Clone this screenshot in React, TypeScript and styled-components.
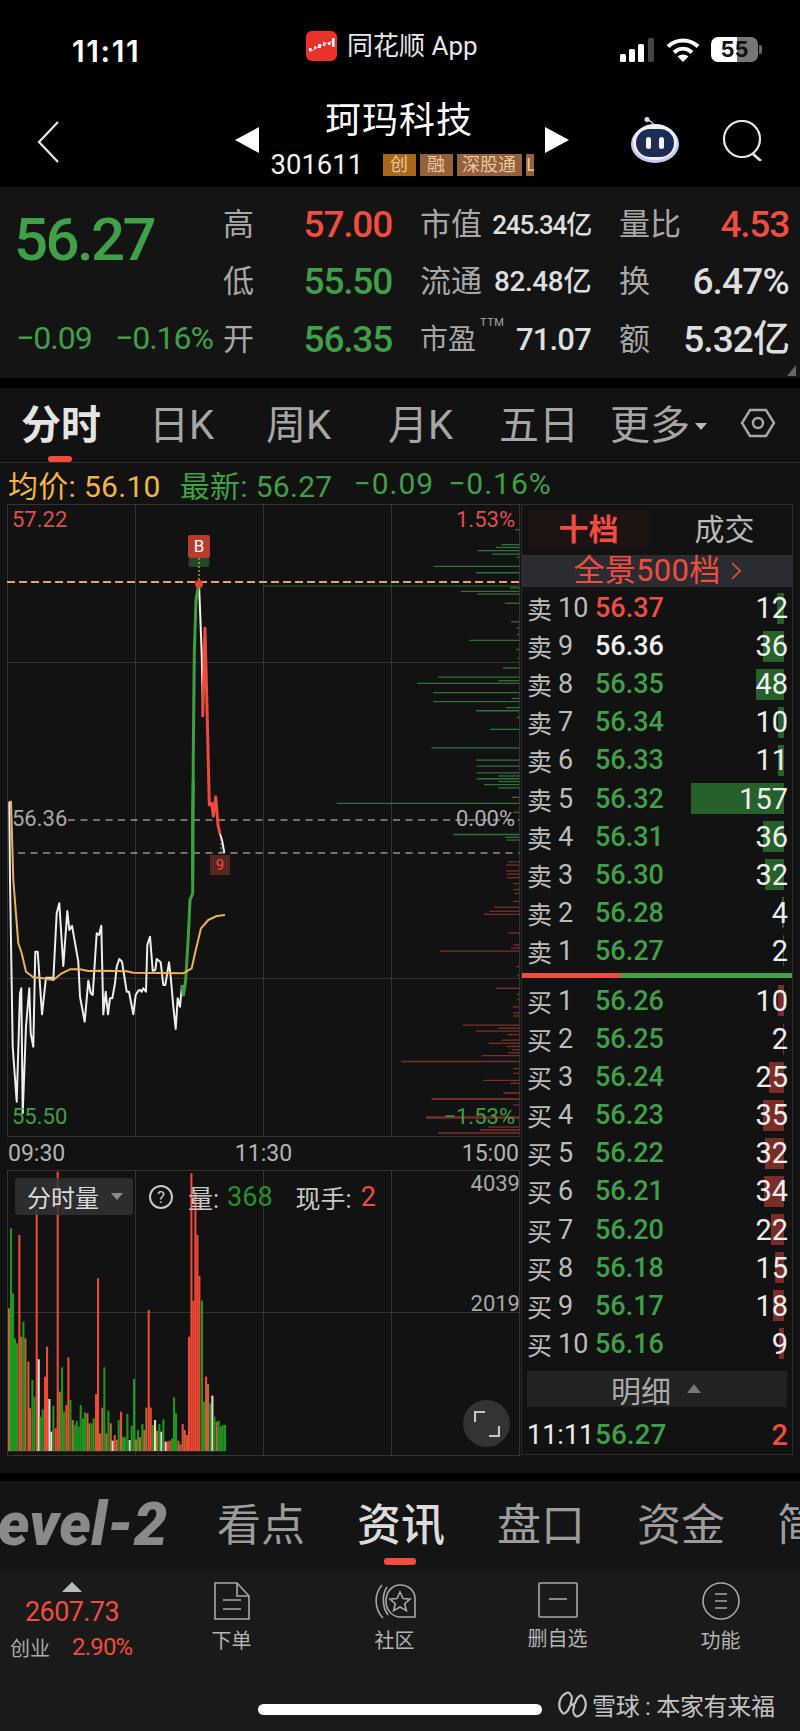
import React from "react";
import styled, { createGlobalStyle } from "styled-components";

const SANS = `Roboto, "Noto Sans CJK SC", sans-serif`;
const RED = "#f04d3f";
const GREEN = "#3fa047";

const Global = createGlobalStyle`
  html, body { margin: 0; padding: 0; background: #000; }
  * { box-sizing: border-box; }
`;

const Page = styled.div`
  width: 800px;
  height: 1731px;
  overflow: hidden;
  background: #000;
  font-family: ${SANS};
  color: #ddd;
  display: flex;
  flex-direction: column;
`;

/* ---------- status bar ---------- */
const StatusBar = styled.div`
  height: 88px;
  display: flex;
  align-items: flex-start;
  color: #fff;
`;
const Clock = styled.div`
  margin: 35px 0 0 72px;
  width: 234px;
  font: 600 30px/32px Inter, sans-serif;
  letter-spacing: 1.6px;
`;
const AppBadge = styled.div`
  display: flex;
  align-items: center;
  gap: 10px;
  margin-top: 31px;
  width: 314px;
  font-size: 26px;
  line-height: 30px;
  color: #e8e8e8;
`;
const StatusIcons = styled.div`
  display: flex;
  align-items: center;
  gap: 11px;
  margin-top: 37px;
`;
const Battery = styled.div`
  position: relative;
  width: 47px;
  height: 25px;
  border-radius: 7px;
  background: linear-gradient(90deg, #fff 0 56%, #777 56% 100%);
  color: #111;
  font: 700 22px/25px Inter, sans-serif;
  text-align: center;
  &::after {
    content: "";
    position: absolute;
    right: -4px;
    top: 8px;
    width: 3px;
    height: 9px;
    border-radius: 0 2px 2px 0;
    background: #666;
  }
`;

/* ---------- nav bar ---------- */
const NavBar = styled.div`
  height: 99px;
  display: grid;
  grid-template-columns: 235px 334px 153px 78px;
  align-items: start;
  color: #fff;
`;
const BackCell = styled.div`
  padding: 33px 0 0 37px;
`;
const TitleCell = styled.div`
  display: flex;
  align-items: flex-start;
  justify-content: space-between;
  padding-top: 39px;
`;
const TitleColumn = styled.div`
  display: flex;
  flex-direction: column;
  width: 263px;
  margin-top: -27px;
  overflow: hidden;
`;
const StockName = styled.div`
  font-size: 36px;
  line-height: 42px;
  text-align: center;
  padding-right: 6px;
  letter-spacing: 1px;
`;
const CodeLine = styled.div`
  display: flex;
  align-items: center;
  margin-top: 10px;
  height: 26px;
`;
const Code = styled.span`
  font-size: 27.5px;
  line-height: 26px;
  width: 112px;
  flex: none;
  color: #f0f0f0;
`;
const Tag = styled.span<{ $orange?: boolean; $w: number }>`
  flex: none;
  width: ${(p) => p.$w}px;
  height: 22px;
  margin-right: 4px;
  background: ${(p) => (p.$orange ? "#a8681a" : "#96603a")};
  color: #e8c9a0;
  font-size: 18px;
  line-height: 22px;
  text-align: center;
  overflow: hidden;
  white-space: nowrap;
`;
const RobotCell = styled.div`
  padding: 29px 0 0 61px;
`;
const SearchCell = styled.div`
  padding-top: 32px;
`;

/* ---------- quote panel ---------- */
const Quote = styled.div`
  position: relative;
  height: 191px;
  background: #141414;
  padding: 9px 0 9px 16px;
  display: grid;
  grid-template-columns: 179px 169px 171px 170px;
  grid-auto-rows: 57.5px;
  column-gap: 28px;
`;
const BigPrice = styled.div`
  grid-row: 1 / span 2;
  grid-column: 1;
  margin: 14px 0 0 -2px;
  font-size: 60px;
  line-height: 60px;
  font-weight: 500;
  letter-spacing: -2.6px;
  color: ${GREEN};
`;
const ChangeRow = styled.div`
  grid-row: 3;
  grid-column: 1;
  width: 197px;
  display: flex;
  justify-content: space-between;
  align-items: center;
  margin-top: -3px;
  font-size: 32px;
  letter-spacing: -1px;
  color: ${GREEN};
`;
const Stat = styled.div`
  display: flex;
  justify-content: space-between;
  align-items: center;
`;
const StatLabel = styled.span<{ $size?: number }>`
  font-size: ${(p) => p.$size ?? 31}px;
  color: #a8a8a8;
  line-height: 40px;
  position: relative;
`;
const Ttm = styled.sup`
  position: absolute;
  left: 100%;
  top: -4px;
  margin-left: 4px;
  font-size: 11px;
  line-height: 14px;
  letter-spacing: 0.5px;
  color: #a8a8a8;
`;
const StatValue = styled.span<{ $size?: number; $color?: string; $ls?: number }>`
  font-size: ${(p) => p.$size ?? 37}px;
  font-weight: 500;
  letter-spacing: ${(p) => p.$ls ?? -1.2}px;
  color: ${(p) => p.$color ?? "#dedede"};
  white-space: nowrap;
  line-height: 40px;
`;
const Corner = styled.div`
  position: absolute;
  right: 4px;
  bottom: 2px;
  width: 0;
  height: 0;
  border-style: solid;
  border-width: 0 0 11px 9px;
  border-color: transparent transparent #666 transparent;
`;
const Band = styled.div<{ $h: number }>`
  height: ${(p) => p.$h}px;
  background: #000;
  flex: none;
`;

/* ---------- chart area ---------- */
const ChartPanel = styled.div`
  height: 1085px;
  background: #121212;
  display: flex;
  flex-direction: column;
`;
const ChartTabs = styled.div`
  height: 75px;
  flex: none;
  padding-left: 21px;
  display: grid;
  grid-template-columns: 128px 117px 122px 111px 111px 130px 1fr;
  align-items: start;
  border-bottom: 1px solid #2c2c2c;
`;
const ChartTab = styled.div<{ $active?: boolean }>`
  position: relative;
  margin-top: 13px;
  height: 50px;
  font-size: 40px;
  line-height: 50px;
  white-space: nowrap;
  color: ${(p) => (p.$active ? "#e4e4e4" : "#a6a6a6")};
  font-weight: ${(p) => (p.$active ? 700 : 400)};
  display: flex;
  align-items: center;
`;
const TabUnderline = styled.div`
  position: absolute;
  left: 27px;
  top: 55px;
  width: 24px;
  height: 6px;
  border-radius: 3px;
  background: ${RED};
`;
const MoreCaret = styled.span`
  width: 0;
  height: 0;
  margin-left: 5px;
  border-style: solid;
  border-width: 7px 6px 0 6px;
  border-color: #bbb transparent transparent transparent;
`;
const HexCell = styled.div`
  padding-top: 20px;
`;
const Legend = styled.div`
  height: 41px;
  flex: none;
  padding-left: 8px;
  display: flex;
  align-items: center;
  font-size: 30px;
  letter-spacing: 0.3px;
  white-space: nowrap;
`;
const LegendPart = styled.span<{ $color: string; $gap?: number; $wide?: boolean }>`
  color: ${(p) => p.$color};
  margin-left: ${(p) => p.$gap ?? 0}px;
  letter-spacing: ${(p) => (p.$wide ? 1 : 0.3)}px;
`;
const Body = styled.div`
  height: 951px;
  flex: none;
  padding-left: 7px;
  display: flex;
  align-items: flex-start;
`;
const LeftColumn = styled.div`
  width: 514px;
  flex: none;
  display: flex;
  flex-direction: column;
`;
const ChartFrame = styled.div<{ $h: number }>`
  position: relative;
  height: ${(p) => p.$h}px;
  flex: none;
`;
const ChartSvg = styled.svg`
  display: block;
`;
const ChartLabel = styled.span<{ $top: number; $left?: number; $right?: number; $color: string }>`
  position: absolute;
  top: ${(p) => p.$top}px;
  ${(p) => (p.$left !== undefined ? `left: ${p.$left}px;` : `right: ${p.$right}px;`)}
  color: ${(p) => p.$color};
  font-size: 22px;
  line-height: 26px;
`;
const TimeAxis = styled.div`
  height: 34px;
  flex: none;
  display: flex;
  justify-content: space-between;
  align-items: center;
  padding: 0 2px 0 1px;
  font-size: 23px;
  color: #b4b4b4;
`;
const VolHeader = styled.div`
  position: absolute;
  left: 8px;
  top: 8px;
  height: 37px;
  display: flex;
  align-items: center;
  font-size: 25px;
  color: #c8c8c8;
  white-space: nowrap;
`;
const VolChip = styled.div`
  width: 118px;
  height: 37px;
  margin-right: 16px;
  padding-left: 12px;
  display: flex;
  align-items: center;
  gap: 12px;
  border-radius: 3px;
  background: rgba(50, 50, 50, 0.85);
  color: #dcdcdc;
  font-size: 24px;
`;
const ChipCaret = styled.span`
  width: 0;
  height: 0;
  border-style: solid;
  border-width: 7px 6px 0 6px;
  border-color: #8a8a8a transparent transparent transparent;
`;
const Help = styled.span`
  width: 24px;
  height: 24px;
  margin-right: 15px;
  border: 2px solid #c8c8c8;
  border-radius: 50%;
  font-size: 17px;
  line-height: 20px;
  text-align: center;
`;
const VolPart = styled.span<{ $color?: string; $gap?: number; $num?: boolean }>`
  color: ${(p) => p.$color ?? "inherit"};
  margin-left: ${(p) => p.$gap ?? 0}px;
  font-size: ${(p) => (p.$num ? 27 : 25)}px;
`;
const ExpandButton = styled.div`
  position: absolute;
  right: 11px;
  bottom: 8px;
  width: 47px;
  height: 47px;
  border-radius: 50%;
  background: #333;
  display: flex;
  align-items: center;
  justify-content: center;
`;
const MarkB = styled.div`
  position: absolute;
  left: 181px;
  top: 31px;
  width: 22px;
  height: 23px;
  border-radius: 2px;
  background: #b83c2e;
  color: #fff;
  font-size: 17px;
  line-height: 23px;
  text-align: center;
`;
const Mark9 = styled.div`
  position: absolute;
  left: 203px;
  top: 351px;
  width: 20px;
  height: 20px;
  background: #5a2520;
  color: ${RED};
  font-size: 15px;
  line-height: 20px;
  text-align: center;
`;

/* ---------- order book ---------- */
const SidePanel = styled.div`
  width: 272px;
  height: 951px;
  flex: none;
  border: 1px solid #2c2c2c;
  display: flex;
  flex-direction: column;
`;
const BookTabs = styled.div`
  height: 50px;
  flex: none;
  padding: 5px 0 0 6px;
  display: flex;
`;
const BookTab = styled.div<{ $active?: boolean }>`
  height: 38px;
  width: 121px;
  flex: ${(p) => (p.$active ? "none" : 1)};
  padding-left: ${(p) => (p.$active ? 0 : 8)}px;
  border-radius: 3px;
  background: ${(p) => (p.$active ? "#1d1312" : "transparent")};
  color: ${(p) => (p.$active ? RED : "#b8b8b8")};
  font-size: 30px;
  font-weight: ${(p) => (p.$active ? 700 : 400)};
  line-height: 40px;
  text-align: center;
`;
const PanoBanner = styled.div`
  height: 32px;
  flex: none;
  background: #2a2c32;
  color: ${RED};
  font-size: 31px;
  letter-spacing: 0.3px;
  line-height: 32px;
  display: flex;
  justify-content: center;
  align-items: center;
  gap: 10px;
`;
const BookRows = styled.div<{ $top: number }>`
  margin-top: ${(p) => p.$top}px;
  flex: none;
  display: flex;
  flex-direction: column;
`;
const BookRow = styled.div`
  position: relative;
  height: 38.1px;
  padding: 0 4px 0 5px;
  display: grid;
  grid-template-columns: 31px 37px 1fr auto;
  align-items: center;
  white-space: nowrap;
`;
const Side = styled.span`
  font-size: 25px;
  color: #bcbcbc;
`;
const Level = styled.span`
  font-size: 27px;
  color: #bcbcbc;
`;
const Price = styled.span<{ $color: string }>`
  font-size: 27px;
  font-weight: 500;
  color: ${(p) => p.$color};
`;
const Vol = styled.span`
  position: relative;
  font-size: 29px;
  color: #eee;
`;
const VolBar = styled.div<{ $buy?: boolean }>`
  position: absolute;
  right: 8px;
  top: 3.5px;
  height: 31px;
  background: ${(p) => (p.$buy ? "#7a2c26" : "#26602a")};
`;
const RatioBar = styled.div`
  margin-top: 3px;
  height: 5px;
  flex: none;
  display: flex;
`;
const RatioPart = styled.div<{ $grow: number; $color: string }>`
  flex: ${(p) => p.$grow};
  background: ${(p) => p.$color};
`;
const DetailBar = styled.div`
  margin: 8px 5px 0 5px;
  height: 36px;
  flex: none;
  background: #222;
  display: flex;
  align-items: center;
  padding-left: 84px;
  gap: 16px;
  font-size: 30px;
  color: #aaa;
`;
const UpCaret = styled.span`
  width: 0;
  height: 0;
  border-style: solid;
  border-width: 0 7px 9px 7px;
  border-color: transparent transparent #777 transparent;
`;
const LastTrade = styled.div`
  margin-top: 10px;
  height: 36px;
  padding: 0 4px 0 5px;
  display: grid;
  grid-template-columns: 68px 1fr auto;
  align-items: center;
  font-size: 27px;
  color: #eee;
  white-space: nowrap;
`;
const LastPrice = styled(Price)`
  font-size: 28px;
`;
const LastVol = styled(Price)`
  font-size: 29px;
`;

/* ---------- section tabs ---------- */
const SectionTabs = styled.div`
  height: 89px;
  flex: none;
  background: #141414;
  display: flex;
  align-items: flex-start;
  gap: 53px;
  overflow: hidden;
`;
const LevelTwo = styled.div`
  flex: none;
  width: 198px;
  margin: 14px 0 0 -34px;
  height: 60px;
  font-size: 60px;
  line-height: 60px;
  font-weight: 900;
  font-style: italic;
  letter-spacing: 0.2px;
  color: #8a8a8a;
  white-space: nowrap;
`;
const SectionTab = styled.div<{ $active?: boolean }>`
  position: relative;
  flex: none;
  width: 87px;
  margin-top: 15px;
  font-size: 44px;
  line-height: 60px;
  font-weight: ${(p) => (p.$active ? 500 : 400)};
  color: ${(p) => (p.$active ? "#dcdcdc" : "#9c9c9c")};
  white-space: nowrap;
`;
const SectionMark = styled.div`
  position: absolute;
  left: 27px;
  top: 62px;
  width: 32px;
  height: 7px;
  border-radius: 3px;
  background: ${RED};
`;

/* ---------- footer ---------- */
const Footer = styled.div`
  height: 161px;
  flex: none;
  background: #1a1a1a;
  display: flex;
  flex-direction: column;
`;
const FooterNav = styled.div`
  height: 120px;
  flex: none;
  display: grid;
  grid-template-columns: 150px repeat(4, 163px);
  padding-top: 12px;
`;
const IndexBlock = styled.div`
  display: flex;
  flex-direction: column;
  align-items: flex-start;
  padding-left: 10px;
`;
const IndexCaret = styled.div`
  width: 0;
  height: 0;
  margin-left: 52px;
  border-style: solid;
  border-width: 0 10px 10px 10px;
  border-color: transparent transparent #bbb transparent;
`;
const IndexValue = styled.div`
  margin: 7px 0 0 15px;
  font-size: 27px;
  line-height: 26px;
  letter-spacing: -0.6px;
  color: ${RED};
`;
const IndexRow = styled.div`
  display: flex;
  align-items: center;
  gap: 22px;
  margin-top: 6px;
  height: 32px;
`;
const IndexName = styled.span`
  font-size: 20px;
  color: #aaa;
`;
const IndexPct = styled.span`
  font-size: 24px;
  letter-spacing: -0.8px;
  color: ${RED};
`;
const NavItem = styled.div`
  display: flex;
  flex-direction: column;
  align-items: center;
`;
const NavLabel = styled.span`
  margin-top: 9px;
  font-size: 20px;
  line-height: 24px;
  color: #b4b4b4;
`;
const FooterBottom = styled.div`
  display: flex;
  align-items: center;
  padding-left: 258px;
  height: 28px;
`;
const HomeBar = styled.div`
  width: 284px;
  height: 11px;
  margin-top: 11px;
  border-radius: 6px;
  background: #fff;
`;
const Watermark = styled.div`
  display: flex;
  align-items: center;
  gap: 5px;
  margin-left: 16px;
  font-size: 24px;
  letter-spacing: -0.3px;
  color: #c4c4c4;
  white-space: nowrap;
`;

/* ---------- data ---------- */
type P = [number, number];
const asks: [number, string, number][] = [
  [10, "56.37", 12], [9, "56.36", 36], [8, "56.35", 48], [7, "56.34", 10], [6, "56.33", 11],
  [5, "56.32", 157], [4, "56.31", 36], [3, "56.30", 32], [2, "56.28", 4], [1, "56.27", 2],
];
const bids: [number, string, number][] = [
  [1, "56.26", 10], [2, "56.25", 2], [3, "56.24", 25], [4, "56.23", 35], [5, "56.22", 32],
  [6, "56.21", 34], [7, "56.20", 22], [8, "56.18", 15], [9, "56.17", 18], [10, "56.16", 9],
];
const z9 = (pts: P[]) => pts.map(([x, y]) => `${(x / 3).toFixed(1)},${(y / 3 + 780).toFixed(1)}`).join(" ");
const z8 = (pts: P[]) => pts.map(([x, y]) => `${(x / 3 + 150).toFixed(1)},${(y / 3 + 520).toFixed(1)}`).join(" ");

const whiteLine: P[] = [[28,65],[30,300],[38,800],[50,965],[60,640],[64,625],[68,1000],[78,740],[88,625],[92,760],[100,800],[106,515],[113,515],[126,703],[138,593],[155,593],[160,600],[170,400],[178,370],[190,558],[202,393],[208,450],[216,437],[235,545],[240,650],[254,725],[265,602],[272,640],[278,645],[290,460],[297,465],[304,437],[310,703],[317,635],[324,703],[330,655],[337,655],[345,610],[350,560],[358,537],[366,545],[380,635],[387,635],[400,703],[407,645],[415,632],[420,630],[425,635],[430,625],[438,635],[442,495],[450,470],[458,572],[466,570],[470,537],[482,547],[490,615],[496,615],[507,547],[512,590],[520,680],[527,747],[533,655],[540,680],[546,615]];
const greenA: P[] = [[546,615],[550,648],[557,600],[565,470],[570,360],[578,340],[578,100],[580,0]];
const greenB: P[] = [[128,1080],[130,700],[133,400],[138,240],[147,190]];
const whiteB: P[] = [[147,190],[155,400],[159,590]];
const redB: P[] = [[158,590],[165,325],[172,600],[178,855],[185,850],[190,888],[197,830],[204,915],[210,942]];
const whiteC: P[] = [[210,942],[216,960],[223,998]];
const avgLine: P[] = [[28,65],[33,65],[40,300],[55,490],[65,520],[78,575],[100,592],[130,595],[160,600],[185,580],[210,568],[240,568],[265,573],[310,572],[380,574],[400,578],[550,580],[575,565],[585,520],[603,445],[625,420],[650,408],[675,405]];

const depthGreen: P[] = [[345,75],[305,113],[288,120],[232,128],[275,137],[350,145],[100,168],[228,184],[182,231],[232,238],[330,222],[315,261],[333,308],[350,323],[350,340],[208,355],[348,378],[352,400],[308,425],[115,448],[295,457],[52,464],[100,487],[100,510],[335,502],[318,525],[228,533],[350,550],[270,580],[95,627],[228,658],[230,673],[230,690],[295,698],[230,705],[295,712],[252,720],[295,728],[335,752],[-189,767],[340,790],[160,846],[315,853],[320,860]];
const depthRed: P[] = [[325,915],[318,923],[318,938],[320,946],[320,955],[340,970],[340,985],[345,995],[340,1015],[282,1030],[268,1040],[252,1048],[325,1095],[340,1125],[333,1133],[120,1141],[348,1180],[350,1203],[288,1235],[350,1250],[350,1262],[338,1282],[340,1297],[340,1305],[188,1328],[295,1336],[228,1343],[322,1352],[305,1366],[265,1374],[320,1382],[335,1390],[325,1398],[245,1405],[5,1420],[340,1438],[340,1450],[250,1468],[330,1475],[310,1500],[95,1515],[340,1530],[78,1560]];
const depthRedFull: P[] = [[504,1093],[432,1099],[426,1118],[488,1127],[480,1130],[438,1133]];

const BAR: Record<string, string> = { r: "#f04a35", g: "#1f961f", o: "#b86e32", w: "#e8d8d0" };
const volBars: [number, number, string][] = [
  [27,445,"o"],[33,205,"g"],[39,400,"g"],[45,535,"g"],[51,550,"g"],[58,225,"r"],[64,530,"o"],[70,485,"g"],[76,535,"o"],[85,605,"o"],[90,745,"r"],[97,660,"g"],[103,710,"g"],[110,150,"r"],[116,598,"w"],[122,770,"g"],[128,748,"g"],[135,650,"r"],[141,560,"r"],[148,717,"w"],[154,815,"w"],[160,738,"g"],[167,805,"r"],[173,35,"r"],[179,695,"o"],[186,622,"g"],[192,755,"g"],[199,735,"r"],[205,592,"r"],[211,720,"g"],[218,780,"o"],[224,795,"g"],[230,783,"g"],[236,800,"g"],[242,735,"g"],[249,775,"g"],[255,757,"g"],[262,760,"o"],[268,790,"o"],[275,790,"g"],[281,775,"g"],[288,702,"r"],[294,355,"r"],[300,820,"o"],[307,743,"o"],[313,622,"g"],[319,820,"o"],[325,752,"g"],[332,790,"o"],[338,842,"w"],[344,825,"r"],[350,840,"o"],[356,780,"g"],[363,755,"r"],[369,830,"g"],[375,832,"g"],[382,762,"g"],[389,840,"w"],[395,797,"g"],[402,657,"g"],[408,838,"o"],[414,810,"g"],[420,832,"o"],[427,792,"g"],[433,810,"o"],[439,743,"o"],[446,450,"r"],[452,743,"r"],[459,795,"g"],[465,780,"w"],[471,812,"o"],[478,792,"g"],[484,815,"w"],[490,778,"g"],[497,845,"w"],[503,845,"r"],[509,842,"r"],[516,835,"g"],[522,712,"g"],[528,760,"g"],[535,842,"o"],[541,853,"o"],[548,792,"r"],[554,810,"o"],[561,825,"r"],[567,530,"r"],[574,40,"r"],[580,422,"r"],[586,95,"r"],[592,225,"r"],[598,348,"r"],[606,422,"g"],[612,725,"g"],[618,650,"r"],[624,672,"o"],[631,730,"g"],[637,707,"w"],[643,770,"g"],[650,785,"o"],[656,782,"g"],[662,800,"g"],[668,795,"g"],[675,795,"g"],
];

const GRID = "#343434";

function PriceChart() {
  return (
    <ChartSvg width={514} height={633} viewBox="7 504 514 633">
      <rect x={7.5} y={504.5} width={512} height={632} fill="none" stroke={GRID} />
      {[135, 263, 391].map((x) => <line key={x} x1={x + 0.5} x2={x + 0.5} y1={504} y2={1136} stroke={GRID} />)}
      {[662, 978].map((y) => <line key={y} x1={7} x2={519} y1={y + 0.5} y2={y + 0.5} stroke={GRID} />)}
      {depthGreen.map(([x, y], i) => (
        <line key={i} x1={x / 3 + 400} x2={519} y1={y / 2.529 + 500} y2={y / 2.529 + 500} stroke="#33713a" strokeWidth={1.3} />
      ))}
      {depthRed.map(([x, y], i) => (
        <line key={i} x1={x / 3 + 400} x2={519} y1={y / 2.529 + 500} y2={y / 2.529 + 500} stroke="#7d302b" strokeWidth={1.3} />
      ))}
      {depthRedFull.map(([x, y], i) => <line key={i} x1={x} x2={519} y1={y} y2={y} stroke="#7d302b" strokeWidth={1.3} />)}
      <line x1={263} x2={519} y1={586} y2={586} stroke="#2c5a2e" />
      <line x1={68} x2={519} y1={820} y2={820} stroke="#d0d0d0" strokeWidth={1.2} strokeDasharray="7 5.5" />
      <line x1={18} x2={519} y1={853} y2={853} stroke="#d8d0c0" strokeWidth={1.2} strokeDasharray="7 5.5" />
      <line x1={7} x2={519} y1={582} y2={582} stroke="#f0a060" strokeWidth={2} strokeDasharray="8 4" />
      <polyline points={z9(whiteLine)} fill="none" stroke="#eee" strokeWidth={2} strokeLinejoin="round" />
      <polyline points={z8(whiteB)} fill="none" stroke="#f4f4f4" strokeWidth={2} />
      <polyline points={z8(redB)} fill="none" stroke="#f04a3c" strokeWidth={3} strokeLinejoin="round" />
      <polyline points={z8(whiteC)} fill="none" stroke="#f4f4f4" strokeWidth={2} />
      <polyline points={z9(greenA)} fill="none" stroke="#3fa040" strokeWidth={3} />
      <polyline points={z8(greenB)} fill="none" stroke="#3fa040" strokeWidth={3} />
      <polyline points={z9(avgLine)} fill="none" stroke="#f0b058" strokeWidth={2} strokeLinejoin="round" />
      <rect x={188.5} y={558} width={21} height={9} rx={2} fill="#1f4a22" />
      <line x1={199} x2={199} y1={558} y2={580} stroke="#c08a5a" strokeWidth={1.5} strokeDasharray="2 2" />
      <circle cx={199} cy={584} r={4} fill="#e0442f" />
      <line x1={221} x2={221} y1={835} y2={853} stroke="#c0a090" strokeWidth={1} strokeDasharray="2 2" />
    </ChartSvg>
  );
}

function VolumeChart() {
  return (
    <ChartSvg width={514} height={286} viewBox="7 1170 514 286">
      <rect x={7.5} y={1170.5} width={512} height={285} fill="none" stroke={GRID} />
      {[135, 263, 391].map((x) => <line key={x} x1={x + 0.5} x2={x + 0.5} y1={1170} y2={1455} stroke={GRID} />)}
      <line x1={7} x2={519} y1={1312.5} y2={1312.5} stroke={GRID} />
      {volBars.map(([cx, top, c], i) => {
        const y = top / 3 + 1160;
        return <rect key={i} x={cx / 3 - 1} y={y} width={2.1} height={1451 - y} fill={BAR[c]} />;
      })}
      <line x1={8} x2={226} y1={1451.5} y2={1451.5} stroke="#2a2a2a" />
    </ChartSvg>
  );
}

/* ---------- icons ---------- */
const AppIcon = () => (
  <svg width={31} height={30} viewBox="0 0 31 30">
    <rect width={31} height={30} rx={6} fill="#e8322b" />
    <rect x={3} y={17} width={2.5} height={3} fill="#fff" />
    <rect x={8} y={15} width={2.5} height={3} fill="#f4d0d0" />
    <rect x={12} y={13} width={3} height={4} fill="#fff" />
    <rect x={17} y={11} width={2.5} height={4} fill="#f4d0d0" />
    <rect x={22} y={11} width={2.5} height={3} fill="#fff" />
    <rect x={26} y={7} width={2.5} height={9} fill="#fff" />
    <path d="M4 21l5-3 5-3 5-2 5-2 3-1" stroke="#ffd8d8" strokeWidth={0.7} fill="none" />
  </svg>
);
const SignalIcon = () => (
  <svg width={35} height={24} viewBox="0 0 35 24">
    <rect x={0} y={16} width={6} height={8} rx={1.5} fill="#fff" />
    <rect x={9} y={11} width={6} height={13} rx={1.5} fill="#fff" />
    <rect x={18} y={6} width={6} height={18} rx={1.5} fill="#fff" />
    <rect x={28} y={0} width={6} height={24} rx={1.5} fill="#444" />
  </svg>
);
const WifiIcon = () => (
  <svg width={34} height={24} viewBox="0 0 34 24" fill="none" stroke="#fff" strokeWidth={4}>
    <path d="M2 8.5C10.5 0.5 23.5 0.5 32 8.5" />
    <path d="M8 14.5C13.5 9.5 20.5 9.5 26 14.5" />
    <path d="M17 24l-5.5-5.5c3-2.7 8-2.7 11 0z" fill="#fff" stroke="none" />
  </svg>
);
const BackIcon = () => (
  <svg width={22} height={42} viewBox="0 0 22 42" fill="none" stroke="#e8e8e8" strokeWidth={2.2}>
    <path d="M21 1L2 21l19 20" />
  </svg>
);
const TriLeft = () => (
  <svg width={24} height={26} viewBox="0 0 24 26"><path d="M24 0v26L0 13z" fill="#fff" /></svg>
);
const TriRight = () => (
  <svg width={24} height={26} viewBox="0 0 24 26"><path d="M0 0v26l24-13z" fill="#fff" /></svg>
);
const RobotIcon = () => (
  <svg width={50} height={46} viewBox="0 0 50 46">
    <path d="M24 9C23 5 20 4 18 3" stroke="#c8c8e8" strokeWidth={1.5} fill="none" />
    <circle cx={17} cy={2.5} r={2.5} fill="#d8d8f0" />
    <ellipse cx={25} cy={27} rx={24} ry={19} fill="#c8c8f0" />
    <ellipse cx={25} cy={25} rx={22} ry={18} fill="#f0f0fa" />
    <rect x={6} y={12} width={38} height={28} rx={14} fill="#1d2c52" />
    <rect x={16} y={20} width={5} height={12} rx={2.5} fill="#f4f4ff" />
    <rect x={29} y={20} width={5} height={12} rx={2.5} fill="#f4f4ff" />
  </svg>
);
const SearchIcon = () => (
  <svg width={41} height={41} viewBox="0 0 41 41" fill="none" stroke="#e8e8e8" strokeWidth={2.2}>
    <circle cx={20} cy={19} r={18} />
    <path d="M31 34l8 7" strokeWidth={2.6} />
  </svg>
);
const HexIcon = () => (
  <svg width={36} height={30} viewBox="0 0 36 30" fill="none" stroke="#a8a8a8" strokeWidth={2.4}>
    <path d="M10 2h16l8 13-8 13H10L2 15z" />
    <circle cx={18} cy={15} r={5} />
  </svg>
);
const ExpandIcon = () => (
  <svg width={26} height={26} viewBox="0 0 26 26" fill="none" stroke="#c8c8c8" strokeWidth={2.2}>
    <path d="M1 11V1h10M25 15v10H15" />
  </svg>
);
const DocIcon = () => (
  <svg width={36} height={38} viewBox="0 0 36 38" fill="none" stroke="#a8a8a8" strokeWidth={1.6}>
    <path d="M1 1h22l12 13v23H1z" />
    <path d="M23 1v13h12M9 18h18M9 27h18" />
  </svg>
);
const CommunityIcon = () => (
  <svg width={44} height={38} viewBox="0 0 44 38" fill="none" stroke="#a8a8a8" strokeWidth={1.6}>
    <path d="M9 3C1 12 1 27 10 36" />
    <path d="M14 5C9 12 9 25 15 33" />
    <path d="M27 3c8 0 15 5 15 14v18H26c-8-1-13-8-13-16C13 10 19 3 27 3z" />
    <path d="M27 10l3 6.5 7 .7-5.3 4.5 1.7 7-6.4-3.7-6.4 3.7 1.7-7-5.3-4.5 7-.7z" />
  </svg>
);
const MinusSquareIcon = () => (
  <svg width={40} height={36} viewBox="0 0 40 36" fill="none" stroke="#a8a8a8" strokeWidth={1.6}>
    <rect x={1} y={1} width={38} height={34} rx={1} />
    <path d="M11 17h18" />
  </svg>
);
const MenuCircleIcon = () => (
  <svg width={38} height={38} viewBox="0 0 38 38" fill="none" stroke="#a8a8a8" strokeWidth={1.6}>
    <circle cx={19} cy={19} r={18} />
    <path d="M13 12h12M13 19h12M13 26h12" />
  </svg>
);
const SnowballLogo = () => (
  <svg width={29} height={29} viewBox="0 0 29 29" fill="none" stroke="#c4c4c4" strokeWidth={2.2}>
    <path d="M10 2.2A13 13 0 0 0 5.5 24" />
    <path d="M19 26.8A13 13 0 0 0 23.5 5" />
    <path d="M10 2.2C19 8 9 14 14.500 14.500S10 21 19 26.800" />
    <path d="M23.5 5C15 9 20 14 14.500 14.500S14 20 5.500 24" />
  </svg>
);

function Row({ kind, level, price, vol, color }: { kind: string; level: number; price: string; vol: number; color: string }) {
  return (
    <BookRow>
      <VolBar $buy={kind === "买"} style={{ width: Math.max(1, vol * 0.59) }} />
      <Side>{kind}</Side>
      <Level>{level}</Level>
      <Price $color={color}>{price}</Price>
      <Vol>{vol}</Vol>
    </BookRow>
  );
}

export default function App() {
  return (
    <Page>
      <Global />
      <StatusBar>
        <Clock>11:11</Clock>
        <AppBadge>
          <AppIcon />
          同花顺 App
        </AppBadge>
        <StatusIcons>
          <SignalIcon />
          <WifiIcon />
          <Battery>55</Battery>
        </StatusIcons>
      </StatusBar>

      <NavBar>
        <BackCell><BackIcon /></BackCell>
        <TitleCell>
          <TriLeft />
          <TitleColumn>
            <StockName>珂玛科技</StockName>
            <CodeLine>
              <Code>301611</Code>
              <Tag $orange $w={33}>创</Tag>
              <Tag $w={33}>融</Tag>
              <Tag $w={65}>深股通</Tag>
              <Tag $w={11}>L</Tag>
            </CodeLine>
          </TitleColumn>
          <TriRight />
        </TitleCell>
        <RobotCell><RobotIcon /></RobotCell>
        <SearchCell><SearchIcon /></SearchCell>
      </NavBar>

      <Quote>
        <BigPrice>56.27</BigPrice>
        <ChangeRow><span>−0.09</span><span>−0.16%</span></ChangeRow>
        <Stat style={{ gridRow: 1, gridColumn: 2 }}><StatLabel>高</StatLabel><StatValue $color={RED}>57.00</StatValue></Stat>
        <Stat style={{ gridRow: 2, gridColumn: 2 }}><StatLabel>低</StatLabel><StatValue $color={GREEN}>55.50</StatValue></Stat>
        <Stat style={{ gridRow: 3, gridColumn: 2 }}><StatLabel>开</StatLabel><StatValue $color={GREEN}>56.35</StatValue></Stat>
        <Stat style={{ gridRow: 1, gridColumn: 3 }}><StatLabel>市值</StatLabel><StatValue $size={26} $ls={-1.2}>245.34亿</StatValue></Stat>
        <Stat style={{ gridRow: 2, gridColumn: 3 }}><StatLabel>流通</StatLabel><StatValue $size={28} $ls={-0.4}>82.48亿</StatValue></Stat>
        <Stat style={{ gridRow: 3, gridColumn: 3 }}><StatLabel $size={28}>市盈<Ttm>TTM</Ttm></StatLabel><StatValue $size={31} $ls={-0.8}>71.07</StatValue></Stat>
        <Stat style={{ gridRow: 1, gridColumn: 4 }}><StatLabel>量比</StatLabel><StatValue $color={RED}>4.53</StatValue></Stat>
        <Stat style={{ gridRow: 2, gridColumn: 4 }}><StatLabel>换</StatLabel><StatValue $ls={-0.8}>6.47%</StatValue></Stat>
        <Stat style={{ gridRow: 3, gridColumn: 4 }}><StatLabel>额</StatLabel><StatValue $ls={-0.9}>5.32亿</StatValue></Stat>
        <Corner />
      </Quote>
      <Band $h={10} />

      <ChartPanel>
        <ChartTabs>
          <ChartTab $active>分时<TabUnderline /></ChartTab>
          <ChartTab>日K</ChartTab>
          <ChartTab>周K</ChartTab>
          <ChartTab>月K</ChartTab>
          <ChartTab>五日</ChartTab>
          <ChartTab>更多<MoreCaret /></ChartTab>
          <HexCell><HexIcon /></HexCell>
        </ChartTabs>
        <Legend>
          <LegendPart $color="#f0b648">均价: 56.10</LegendPart>
          <LegendPart $color={GREEN} $gap={19}>最新: 56.27</LegendPart>
          <LegendPart $color={GREEN} $gap={21} $wide>−0.09</LegendPart>
          <LegendPart $color={GREEN} $gap={14} $wide>−0.16%</LegendPart>
        </Legend>
        <Body>
          <LeftColumn>
            <ChartFrame $h={632}>
              <PriceChart />
              <ChartLabel $top={3} $left={5} $color="#e0504a">57.22</ChartLabel>
              <ChartLabel $top={3} $right={6} $color="#e0504a">1.53%</ChartLabel>
              <ChartLabel $top={302} $left={5} $color="#a8a8a8">56.36</ChartLabel>
              <ChartLabel $top={302} $right={6} $color="#b0b0b0">0.00%</ChartLabel>
              <ChartLabel $top={600} $left={5} $color={GREEN}>55.50</ChartLabel>
              <ChartLabel $top={600} $right={6} $color={GREEN}>−1.53%</ChartLabel>
              <MarkB>B</MarkB>
              <Mark9>9</Mark9>
            </ChartFrame>
            <TimeAxis>
              <span>09:30</span>
              <span>11:30</span>
              <span>15:00</span>
            </TimeAxis>
            <ChartFrame $h={285}>
              <VolumeChart />
              <VolHeader>
                <VolChip>分时量<ChipCaret /></VolChip>
                <Help>?</Help>
                <VolPart>量:</VolPart>
                <VolPart $num $color="#2a8f2a" $gap={8}>368</VolPart>
                <VolPart $gap={23}>现手:</VolPart>
                <VolPart $num $color={RED} $gap={9}>2</VolPart>
              </VolHeader>
              <ChartLabel $top={1} $right={1} $color="#a8a8a8">4039</ChartLabel>
              <ChartLabel $top={121} $right={1} $color="#a8a8a8">2019</ChartLabel>
              <ExpandButton><ExpandIcon /></ExpandButton>
            </ChartFrame>
          </LeftColumn>
          <SidePanel>
            <BookTabs>
              <BookTab $active>十档</BookTab>
              <BookTab>成交</BookTab>
            </BookTabs>
            <PanoBanner>
              全景500档
              <svg width={10} height={18} viewBox="0 0 10 18" fill="none" stroke={RED} strokeWidth={1.6}><path d="M1 1l8 8-8 8" /></svg>
            </PanoBanner>
            <BookRows $top={2}>
              {asks.map(([l, p, v]) => (
                <Row key={l} kind="卖" level={l} price={p} vol={v} color={p === "56.37" ? RED : p === "56.36" ? "#f0f0f0" : GREEN} />
              ))}
            </BookRows>
            <RatioBar>
              <RatioPart $grow={100} $color={RED} />
              <RatioPart $grow={172} $color={GREEN} />
            </RatioBar>
            <BookRows $top={4}>
              {bids.map(([l, p, v]) => (
                <Row key={l} kind="买" level={l} price={p} vol={v} color={GREEN} />
              ))}
            </BookRows>
            <DetailBar>明细<UpCaret /></DetailBar>
            <LastTrade>
              <span>11:11</span>
              <LastPrice $color={GREEN}>56.27</LastPrice>
              <LastVol $color={RED}>2</LastVol>
            </LastTrade>
          </SidePanel>
        </Body>
      </ChartPanel>
      <Band $h={8} />

      <SectionTabs>
        <LevelTwo>Level-2</LevelTwo>
        <SectionTab>看点</SectionTab>
        <SectionTab $active>资讯<SectionMark /></SectionTab>
        <SectionTab>盘口</SectionTab>
        <SectionTab>资金</SectionTab>
        <SectionTab>简况</SectionTab>
      </SectionTabs>

      <Footer>
        <FooterNav>
          <IndexBlock>
            <IndexCaret />
            <IndexValue>2607.73</IndexValue>
            <IndexRow>
              <IndexName>创业</IndexName>
              <IndexPct>2.90%</IndexPct>
            </IndexRow>
          </IndexBlock>
          <NavItem><DocIcon /><NavLabel>下单</NavLabel></NavItem>
          <NavItem><CommunityIcon /><NavLabel>社区</NavLabel></NavItem>
          <NavItem><MinusSquareIcon /><NavLabel>删自选</NavLabel></NavItem>
          <NavItem><MenuCircleIcon /><NavLabel>功能</NavLabel></NavItem>
        </FooterNav>
        <FooterBottom>
          <HomeBar />
          <Watermark><SnowballLogo />雪球 : 本家有来福</Watermark>
        </FooterBottom>
      </Footer>
    </Page>
  );
}
